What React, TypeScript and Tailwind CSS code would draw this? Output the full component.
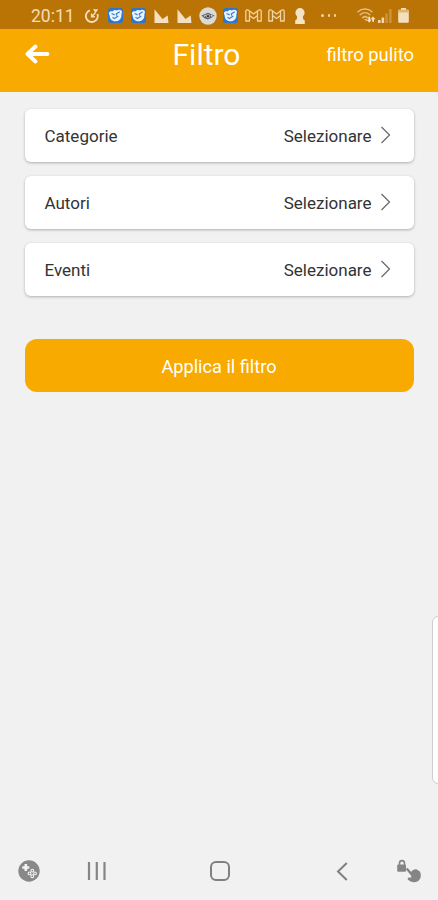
import type { ReactNode } from "react";

const FILTERS = ["Categorie", "Autori", "Eventi"];

function StatusSlot({ children }: { children: ReactNode }) {
  return <span className="flex w-[23.1px] shrink-0 justify-center">{children}</span>;
}

function AlarmIcon() {
  return (
    <svg width="16" height="16" viewBox="0 0 16 16" fill="none" stroke="#f6dfbd" strokeWidth="1.8">
      <path d="M6 2.300A6 6 0 1 0 13.500 6" />
      <path d="M7.600 5.500v3.300h3.200M8 8.500l3.500-4" strokeWidth="1.400" />
      <path d="M9 1.200h5.200L11.600 5z" fill="#f6dfbd" stroke="none" />
    </svg>
  );
}

function AppBadge() {
  return (
    <svg width="15" height="15" viewBox="0 0 14 14">
      <rect width="14" height="14" rx="2.5" fill="#2f76cb" />
      <path
        d="M.8 4.600C1.400 3 2.800 2.700 4 3.200 5.200 1.800 7 1.200 8.200 2.400 9.800 1 12.600 1.400 13 3.400c.2 1-.5 1.600-.5 2.600.4 3.200-1.600 6.200-5.400 6.400C3.800 12.600 1.700 10.300 1.600 7.500 1.600 6.400.8 5.800.8 4.600z"
        fill="#eaf4fc"
      />
      <path d="M3.300 5.100l2.900 1.300M11 3.600L7.800 5.500l.3 1.600M4.200 8.600l1.800 1.300 3.600-2.500" fill="none" stroke="#3c80cf" strokeWidth="1.100" />
    </svg>
  );
}

function SailIcon() {
  return (
    <svg width="15" height="14" viewBox="0 0 15 14">
      <path d="M.5.3L8.500 10l5.200-3.600.8 7.600H.5z" fill="#f4e0c0" />
    </svg>
  );
}

function EyeBadge() {
  return (
    <svg width="18" height="18" viewBox="0 0 18 18">
      <circle cx="9" cy="9" r="8.700" fill="#dcd9d6" />
      <path d="M2.500 8.500l4-1.800 2.500-.9 3 1.200 3.500 1.500-3 2.200-3.700 1.700-3.300-1.200z" fill="#5d626b" />
      <path d="M5.200 9.500l1.300-1.700M12 8l1.300 1.500" stroke="#e8e6e3" strokeWidth="1.200" />
      <circle cx="9" cy="9" r="1.900" fill="#b9babd" />
      <circle cx="9" cy="9.200" r="1.100" fill="#30353e" />
    </svg>
  );
}

function MailIcon() {
  return (
    <svg width="17" height="13" viewBox="0 0 17 13" fill="none" stroke="#f4d3a3" strokeWidth="1.3" strokeLinejoin="round">
      <path d="M.8 2.300C.8.600 2.600.500 3.600 1.300L8.500 5l4.900-3.700c1-.8 2.800-.7 2.800 1V12h-3.700V6.600l-4 3-4-3V12H.8z" />
      <path d="M4.500 2v4.600M12.500 2v4.600" />
    </svg>
  );
}

function KeyholeIcon() {
  return (
    <svg width="12" height="16" viewBox="0 0 12 16" fill="#f4e3c5">
      <circle cx="6" cy="4.700" r="4.600" />
      <path d="M3.300 7h5.400l.5 4.300 1.600 1.200V16H1.200v-3.500l1.600-1.200z" />
    </svg>
  );
}

function WifiIcon() {
  return (
    <svg width="19" height="15" viewBox="0 0 19 15" fill="none" stroke="#e6bd80" strokeWidth="1.5" strokeLinecap="round">
      <path d="M1 3.800C4.800.2 11.200.2 15 3.800M3.200 6.700C6 4.200 10 4.200 12.800 6.700M5.500 9.700c1.500-1.300 3.500-1.300 5 0" />
      <path d="M9.500 13.500L7 11h3z" fill="#e6bd80" stroke="none" />
      <path d="M11.300 8.700v3H9.600l2.700 3 2.200-3h-1.300v-3zM13.500 11.200L16 8.500l2.500 2.700H17v2.500h-1.800v-2.500z" fill="#f7e1bf" stroke="none" />
    </svg>
  );
}

function SignalIcon() {
  return (
    <svg width="14" height="15" viewBox="0 0 14 15">
      <path d="M0 12h2.500v3H0zM3.600 9.500h2.500V15H3.600z" fill="#f3d8ac" />
      <path d="M7.300 5.500h2.400V15H7.300zM11.200 1h2.400v14h-2.400z" fill="#cd9342" />
    </svg>
  );
}

function BatteryIcon() {
  return (
    <svg width="11" height="15" viewBox="0 0 11 15">
      <path d="M3 0h5v1.800h1.500c.8 0 1.300.5 1.300 1.300v10.400c0 .8-.5 1.300-1.300 1.300h-8c-.8 0-1.300-.5-1.300-1.300V3.100c0-.8.5-1.300 1.300-1.300H3z" fill="#f3dfbc" />
      <path d="M.2 4.500V3.100c0-.8.5-1.300 1.300-1.300h8c.8 0 1.300.5 1.300 1.300v1.400z" fill="#e0b475" />
    </svg>
  );
}

function StatusBar() {
  return (
    <div className="flex h-[29px] items-center bg-[#ba7406] pt-[2px] pl-[31px]">
      <span className="w-[49.5px] shrink-0 pt-[2px] text-[17.5px] leading-none text-[#f6dcb5]">20:11</span>
      <StatusSlot><AlarmIcon /></StatusSlot>
      <StatusSlot><AppBadge /></StatusSlot>
      <StatusSlot><AppBadge /></StatusSlot>
      <StatusSlot><SailIcon /></StatusSlot>
      <StatusSlot><SailIcon /></StatusSlot>
      <StatusSlot><EyeBadge /></StatusSlot>
      <StatusSlot><AppBadge /></StatusSlot>
      <StatusSlot><MailIcon /></StatusSlot>
      <StatusSlot><MailIcon /></StatusSlot>
      <StatusSlot><KeyholeIcon /></StatusSlot>
      <span className="ml-[10px] flex w-[15px] justify-between">
        <i className="size-[2.5px] rounded-full bg-[#f2d3a2]" />
        <i className="size-[2.5px] rounded-full bg-[#f2d3a2]" />
        <i className="size-[2.5px] rounded-full bg-[#f2d3a2]" />
      </span>
      <span className="ml-[20.5px] flex items-center">
        <WifiIcon />
        <span className="ml-[2px]"><SignalIcon /></span>
        <span className="ml-[6px]"><BatteryIcon /></span>
      </span>
    </div>
  );
}

function Header() {
  return (
    <header className="flex h-[63px] items-start bg-[#f8aa00] pr-[24px] pl-[25px] text-white">
      <button className="mt-[15px] w-[147.5px] shrink-0">
        <svg width="25" height="20" viewBox="0 0 25 20" fill="none" stroke="white" strokeWidth="3.8" strokeLinecap="round" strokeLinejoin="round">
          <path d="M22.500 10H3M10.500 2.500L2.500 10l8 7.500" />
        </svg>
      </button>
      <h1 className="mt-[8px] text-[30px] leading-9">Filtro</h1>
      <button className="mt-[14px] ml-auto text-[18.4px] leading-6">filtro pulito</button>
    </header>
  );
}

function FilterRow({ label }: { label: string }) {
  return (
    <button className="flex h-[53px] items-center rounded-[6px] bg-white pt-[2px] pr-[23px] pl-[20px] text-[17px] text-[#333] shadow-[0_1px_3px_rgba(0,0,0,0.28)]">
      <span>{label}</span>
      <span className="ml-auto">Selezionare</span>
      <svg className="mb-[3px] ml-[8px]" width="11" height="18" viewBox="0 0 11 18" fill="none" stroke="#666" strokeWidth="1.2">
        <path d="M1.500 1l8 8-8 8" />
      </svg>
    </button>
  );
}

function NavBar() {
  return (
    <nav className="flex h-[58px] items-center pl-[18px] text-[#808080]">
      <svg width="22" height="22" viewBox="0 0 22 22">
        <circle cx="11" cy="11" r="10.700" fill="#888" />
        <path d="M7.800 4v7M4.300 7.500h7" stroke="#f4f4f4" strokeWidth="2.600" />
        <g fill="none" stroke="#f4f4f4" strokeWidth="1.100">
          <circle cx="14.300" cy="10.600" r="1.400" />
          <circle cx="11.500" cy="13.400" r="1.400" />
          <circle cx="17" cy="13.400" r="1.400" />
          <circle cx="14.300" cy="16.200" r="1.400" />
        </g>
      </svg>
      <svg className="ml-[47px]" width="20" height="18" viewBox="0 0 20 18" fill="none" stroke="#858585" strokeWidth="2.2">
        <path d="M2 0v18M9.800 0v18M17.500 0v18" />
      </svg>
      <svg className="ml-[102.5px]" width="20" height="20" viewBox="0 0 20 20" fill="none" stroke="currentColor" strokeWidth="2">
        <rect x="1" y="1" width="18" height="18" rx="5" />
      </svg>
      <svg className="ml-[106.5px]" width="12" height="19" viewBox="0 0 12 19" fill="none" stroke="currentColor" strokeWidth="2">
        <path d="M10.800 1L2 9.500l8.800 8.500" />
      </svg>
      <svg className="ml-[48px]" width="26" height="25" viewBox="0 0 26 25" fill="#858585">
        <path d="M3.500 6.500V4.200C3.500.7 8.500.7 8.500 4.200V6.500" fill="none" stroke="#858585" strokeWidth="1.600" />
        <rect x="1.200" y="5.400" width="8.800" height="7.300" rx="1" />
        <path d="M11.300 10.200l5 6" fill="none" stroke="#858585" strokeWidth="2.400" strokeLinecap="round" />
        <path d="M14.800 13.500c.9-2.200 2.600-3 4-3.100 1.500-.3 2.500.2 3.300 1.200 1.900.5 2.700 2.300 2.700 4.400.2 4-2.400 7-6.200 7.200-2.600.1-5-.9-6.500-2.500-.9-1-.3-2.300 1-2.200l2.300.1z" />
      </svg>
    </nav>
  );
}

export default function App() {
  return (
    <div className="relative flex h-[900px] w-[438px] flex-col overflow-hidden bg-[#f1f1f1] font-[Roboto,sans-serif]">
      <StatusBar />
      <Header />

      <main className="flex flex-1 flex-col gap-[14px] px-[24.5px] pt-[17px]">
        {FILTERS.map((label) => (
          <FilterRow key={label} label={label} />
        ))}
        <button className="mt-[29px] h-[53px] rounded-xl bg-[#f8aa00] pt-[3px] text-[18.2px] text-white">
          Applica il filtro
        </button>
      </main>

      <NavBar />

      {/* Edge panel handle */}
      <div className="absolute top-[616px] -right-3 h-[168px] w-[18px] rounded-[6px] border border-[#cfcfcf] bg-white" />
    </div>
  );
}
